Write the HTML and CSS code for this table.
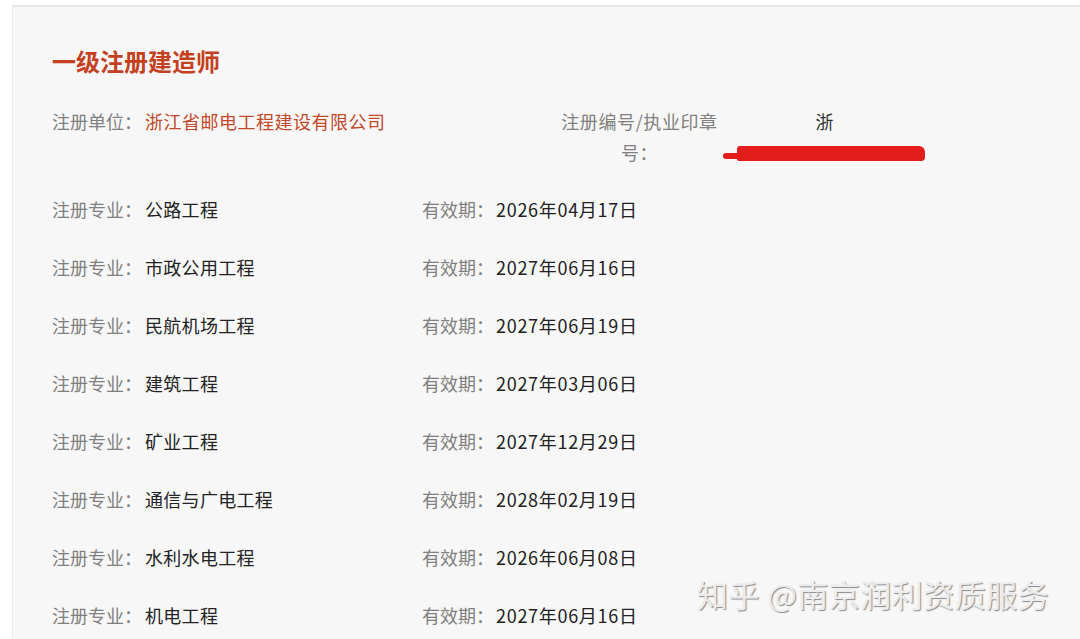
FILE: index.html
```html
<!DOCTYPE html>
<html lang="zh-CN">

<head>
  <meta charset="UTF-8">
  <meta name="viewport" content="width=device-width, initial-scale=1.0">
  <title>一级注册建造师</title>
  <link rel="stylesheet" href="styles.css">
</head>

<body>
  <div class="card">
    <h2 class="title">一级注册建造师</h2>

    <div class="unit-row">
      <div class="unit">
        <span class="label">注册单位：</span><span class="company">浙江省邮电工程建设有限公司</span>
      </div>
      <div class="regno-label">注册编号/执业印章号：</div>
      <div class="regno-value">浙<br><span class="redact"></span></div>
    </div>

    <div class="row">
      <span class="label">注册专业：</span><span class="value major">公路工程</span>
      <span class="label">有效期：</span><span class="value date">2026年04月17日</span>
    </div>
    <div class="row">
      <span class="label">注册专业：</span><span class="value major">市政公用工程</span>
      <span class="label">有效期：</span><span class="value date">2027年06月16日</span>
    </div>
    <div class="row">
      <span class="label">注册专业：</span><span class="value major">民航机场工程</span>
      <span class="label">有效期：</span><span class="value date">2027年06月19日</span>
    </div>
    <div class="row">
      <span class="label">注册专业：</span><span class="value major">建筑工程</span>
      <span class="label">有效期：</span><span class="value date">2027年03月06日</span>
    </div>
    <div class="row">
      <span class="label">注册专业：</span><span class="value major">矿业工程</span>
      <span class="label">有效期：</span><span class="value date">2027年12月29日</span>
    </div>
    <div class="row">
      <span class="label">注册专业：</span><span class="value major">通信与广电工程</span>
      <span class="label">有效期：</span><span class="value date">2028年02月19日</span>
    </div>
    <div class="row">
      <span class="label">注册专业：</span><span class="value major">水利水电工程</span>
      <span class="label">有效期：</span><span class="value date">2026年06月08日</span>
    </div>
    <div class="row">
      <span class="label">注册专业：</span><span class="value major">机电工程</span>
      <span class="label">有效期：</span><span class="value date">2027年06月16日</span>
    </div>
  </div>

  <div class="watermark">知乎 @南京润利资质服务</div>
</body>

</html>
```

FILE: styles.css
```css
html,
body {
  margin: 0;
  padding: 0;
  height: 639px;
  overflow: hidden;
  background-color: #fff;
  font-family: "Microsoft YaHei", "Noto Sans CJK SC", sans-serif;
}

.card {
  margin: 5px 0 0 12px;
  padding: 38px 0 0 39px;
  background-color: #f7f7f7;
  border-top: 2px solid #e6e6e6;
  border-left: 1px solid #ececec;
  height: 700px;
}

.title {
  margin: 0;
  font-size: 24px;
  line-height: 32px;
  font-weight: bold;
  color: #c4401f;
}

.unit-row {
  display: flex;
  margin-top: 29px;
  font-size: 18px;
  line-height: 31px;
}

.unit {
  width: 506px;
}

.label {
  color: #808080;
}

.company {
  color: #c2482a;
  margin-left: 3px;
  letter-spacing: 0.5px;
}

.regno-label {
  width: 163px;
  text-align: center;
  color: #808080;
  letter-spacing: 0.6px;
}

.regno-value {
  width: 203px;
  margin-left: 2px;
  text-align: center;
  color: #333;
}

.redact {
  display: inline-block;
  position: relative;
  width: 188px;
  height: 15px;
  margin-left: 12px;
  vertical-align: -1px;
  background-color: #e21d1b;
  border-radius: 3px 6px 4px 2px;
}

.redact::before {
  content: "";
  position: absolute;
  left: -14px;
  top: 7px;
  width: 20px;
  height: 6px;
  background-color: #e21d1b;
  border-radius: 3px;
}

.row {
  display: flex;
  font-size: 18px;
  line-height: 58px;
}

.unit-row + .row {
  margin-top: 12px;
}

.value {
  color: #222;
}

.major {
  width: 277px;
  margin-left: 3px;
  letter-spacing: 0.3px;
}

.date {
  margin-left: 2px;
  letter-spacing: 0.7px;
}

.watermark {
  position: absolute;
  left: 697px;
  top: 575px;
  font-size: 31px;
  line-height: 38px;
  color: #ececec;
  text-shadow: 1px 1px 1px #8a8a8a;
  letter-spacing: 0.5px;
}
```
